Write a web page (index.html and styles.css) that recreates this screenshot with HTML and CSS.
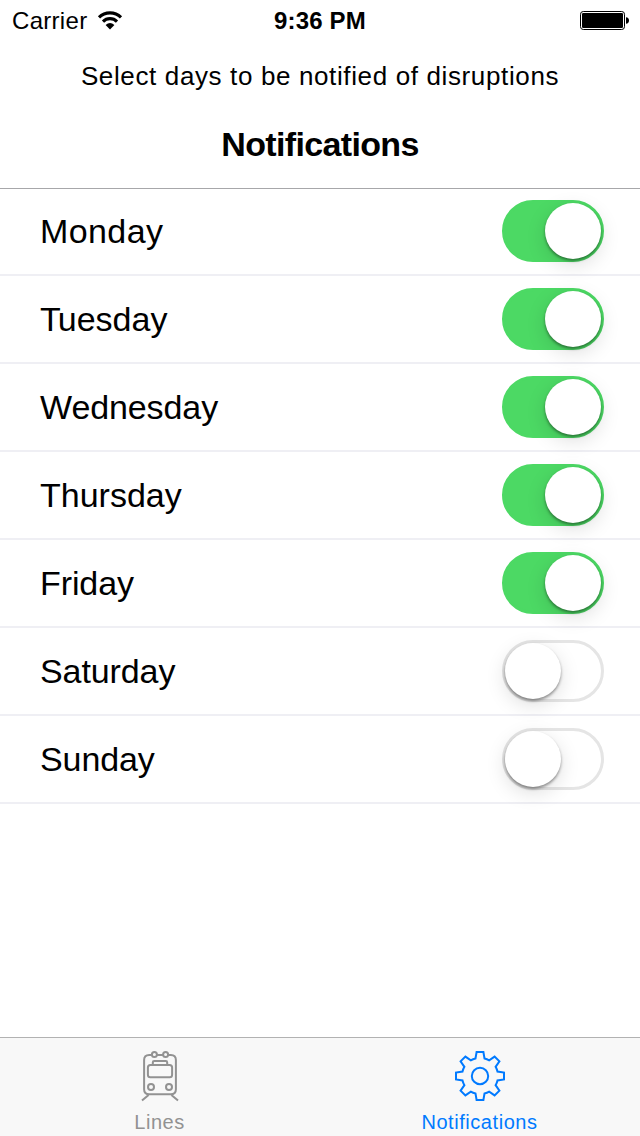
FILE: index.html
```html
<!DOCTYPE html>
<html lang="en">
<head>
<meta charset="utf-8">
<title>Notifications</title>
<link rel="stylesheet" href="styles.css">
</head>
<body>
<div class="screen">
  <header class="header">
    <div class="status">
      <div class="carrier"><span>Carrier</span>
        <svg class="wifi" width="26" height="19" viewBox="0 0 26 19" fill="none" stroke="#000" stroke-width="3.1">
          <path d="M2 6.4A15.6 15.6 0 0 1 24 6.4"/>
          <path d="M6 10.6A9.8 9.8 0 0 1 20 10.6"/>
          <path d="M8.6 14Q13 10.2 17.4 14L13 18.4Z" fill="#000" stroke="none"/>
        </svg>
      </div>
      <div class="time">9:36 PM</div>
      <svg class="battery" width="50" height="20" viewBox="0 0 50 20">
        <rect x=".5" y="1.5" width="44" height="18" rx="2.8" fill="none" stroke="#000"/>
        <rect x="2" y="3" width="41" height="15" rx="1.2"/>
        <path d="M46 7.2Q49 7.4 49 10.5T46 13.8Z"/>
      </svg>
    </div>
    <p class="hint">Select days to be notified of disruptions</p>
    <h1 class="title">Notifications</h1>
  </header>
  <main class="days">
    <div class="row"><span class="day monday">Monday</span><span class="switch on"><span class="knob"></span></span></div>
    <div class="row"><span class="day tuesday"><span class="kern">T</span>uesday</span><span class="switch on"><span class="knob"></span></span></div>
    <div class="row"><span class="day">Wednesday</span><span class="switch on"><span class="knob"></span></span></div>
    <div class="row"><span class="day thursday">Thursday</span><span class="switch on"><span class="knob"></span></span></div>
    <div class="row"><span class="day">Friday</span><span class="switch on"><span class="knob"></span></span></div>
    <div class="row"><span class="day">Saturday</span><span class="switch"><span class="knob"></span></span></div>
    <div class="row"><span class="day">Sunday</span><span class="switch"><span class="knob"></span></span></div>
  </main>
  <nav class="tabs">
    <div class="tab">
      <svg width="40" height="54" viewBox="0 0 40 54" fill="none" stroke="currentColor" stroke-width="2">
        <path d="M12 5H9.2Q4.1 5 4.1 10V39.2Q4.1 44.2 9.2 44.2H30.8Q35.9 44.2 35.9 39.2V10Q35.9 5 30.8 5H28M17 5H23"/>
        <circle cx="14.4" cy="4.4" r="2.5"/><circle cx="25.6" cy="4.4" r="2.5"/>
        <rect x="7.9" y="15" width="24.2" height="12.2" rx="2.5"/>
        <path d="M12.8 15V12.4Q12.8 11 14.2 11H25.8Q27.2 11 27.2 12.4V15"/>
        <circle cx="11" cy="37" r="3"/><circle cx="29" cy="37" r="3"/>
        <path d="M8.6 45L2 50.6M31.4 45L38 50.6"/>
      </svg>
      <span class="label">Lines</span>
    </div>
    <div class="tab active">
      <svg width="54" height="54" viewBox="-27 -26 54 54" fill="none" stroke="currentColor" stroke-width="2">
        <path d="M-3.4-24H3.4L4.5-17.5Q7-16.9 9.2-15.6L14.6-19.4L19.4-14.6L15.6-9.2Q16.9-7 17.5-4.5L24-3.4V3.4L17.5 4.5Q16.9 7 15.6 9.2L19.4 14.6L14.6 19.4L9.2 15.6Q7 16.9 4.5 17.5L3.4 24H-3.4L-4.5 17.5Q-7 16.9-9.2 15.6L-14.6 19.4L-19.4 14.6L-15.6 9.2Q-16.9 7-17.5 4.5L-24 3.4V-3.4L-17.5-4.5Q-16.9-7-15.6-9.2L-19.4-14.6L-14.6-19.4L-9.2-15.6Q-7-16.9-4.5-17.5Z"/>
        <circle r="8.2"/>
      </svg>
      <span class="label">Notifications</span>
    </div>
  </nav>
</div>
</body>
</html>
```
FILE: styles.css
```css
* { box-sizing: border-box; }
body { margin: 0; background: #fff; color: #000; font-family: "Liberation Sans", Arial, sans-serif; }
.screen { width: 640px; height: 1136px; display: flex; flex-direction: column; overflow: hidden; }
.header { height: 189px; border-bottom: 1px solid #a7a7aa; text-align: center; }
.status { height: 40px; display: grid; grid-template-columns: 1fr auto 1fr; align-items: center; padding: 1px 10px 0 12px; font-size: 24px; line-height: 40px; }
.carrier { display: flex; align-items: center; gap: 10px; letter-spacing: .3px; }
.wifi { margin-top: -2px; }
.time { font-weight: bold; letter-spacing: .15px; margin-right: 2px; }
.battery { justify-self: end; margin-top: -2px; }
.hint { margin: 16px 0 0; font-size: 26px; line-height: 40px; letter-spacing: .63px; }
.title { margin: 28px 0 0; font-size: 34px; line-height: 40px; letter-spacing: -.65px; }
.days { flex: 1; }
.row { height: 88px; border-bottom: 2px solid #efeff4; display: flex; align-items: center; justify-content: space-between; padding: 0 36px 0 40px; }
.row:first-child { height: 87px; padding-bottom: 1px; }
.day { font-size: 34px; line-height: 40px; letter-spacing: -.1px; }
.monday { letter-spacing: .4px; }
.tuesday { letter-spacing: 0; }
.thursday { letter-spacing: 0; }
.kern { letter-spacing: -3px; }
.switch { width: 102px; height: 62px; border-radius: 31px; border: 3px solid #e5e5e5; display: flex; }
.on { background: #4cd964; border-color: #4cd964; justify-content: flex-end; }
.knob { width: 56px; height: 56px; border-radius: 50%; background: #fff; box-shadow: 0 6px 20px rgba(0,0,0,.13), 0 2px 3px rgba(0,0,0,.4); }
.tabs { height: 99px; background: #f8f8f8; border-top: 1px solid #b2b2b2; display: grid; grid-template-columns: 1fr 1fr; color: #929292; }
.tab { display: flex; flex-direction: column; align-items: center; padding-top: 12px; }
.active { color: #007aff; }
.label { font-size: 20px; line-height: 24px; margin: 6px 1px 0 0; letter-spacing: .55px; }
```
